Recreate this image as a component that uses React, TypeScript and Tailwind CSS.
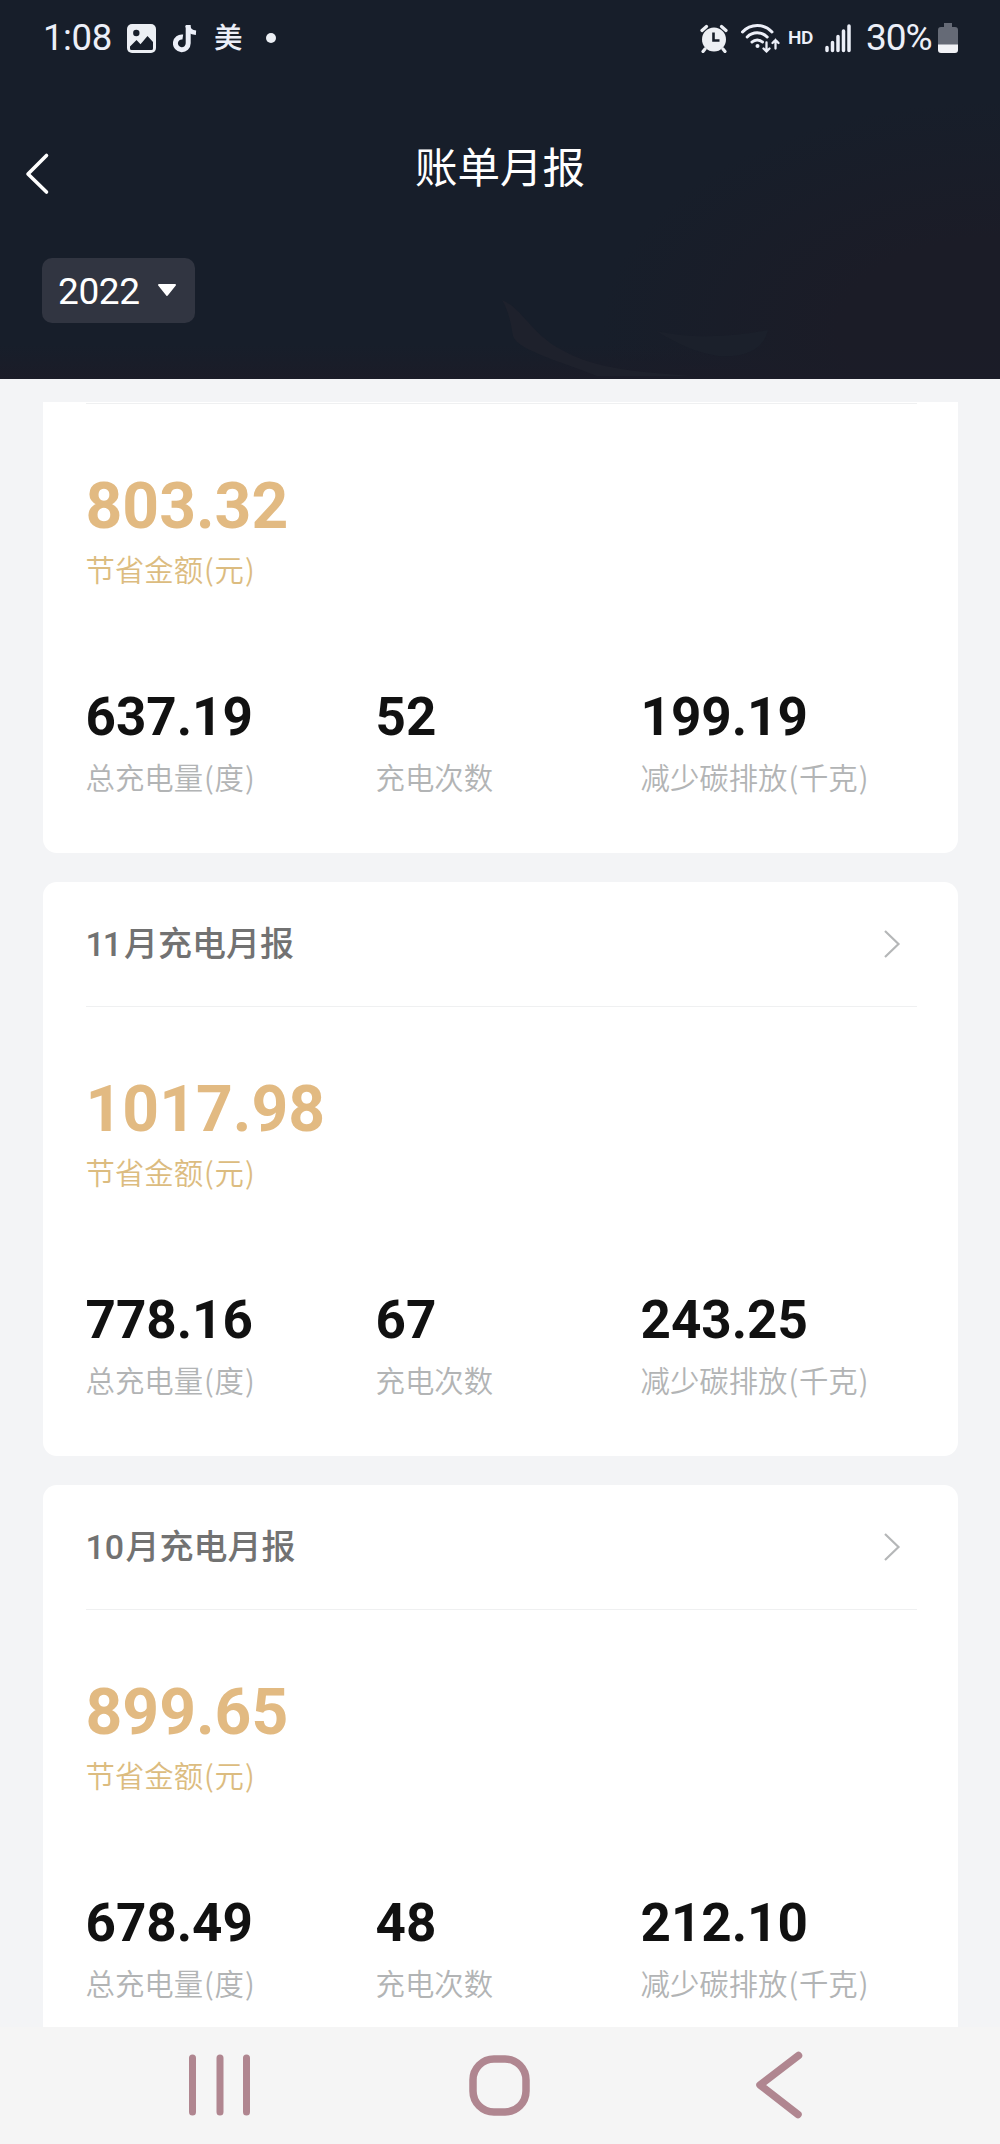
type Report = {
  month?: string;
  saved: string;
  energy: string;
  count: string;
  carbon: string;
};

const reports: Report[] = [
  { saved: "803.32", energy: "637.19", count: "52", carbon: "199.19" },
  { month: "11", saved: "1017.98", energy: "778.16", count: "67", carbon: "243.25" },
  { month: "10", saved: "899.65", energy: "678.49", count: "48", carbon: "212.10" },
];

function StatusBar() {
  return (
    <div className="flex h-[76px] items-center justify-between pl-[43px] pr-[42px] text-[#eceff8]">
      <div className="flex items-center">
        <span className="w-[84px] text-[36.5px] leading-[44px] tracking-[-0.4px]">1:08</span>
        <svg width="29" height="29" viewBox="0 0 29 29">
          <rect width="29" height="29" rx="5" fill="#eceff4" />
          <circle cx="9.3" cy="9" r="3.2" fill="#171e2a" />
          <path d="M3 22.5 9.5 16l4 4.200L20.500 12 26 18v6.500a1.500 1.500 0 0 1-1.500 1.500h-20A1.500 1.500 0 0 1 3 24.500z" fill="#171e2a" />
        </svg>
        <svg className="ml-[17px]" width="25" height="29" viewBox="0 0 25 29">
          <path d="M15.200 1v18.300a6.400 6.400 0 1 1-5.400-6.300" fill="none" stroke="currentColor" strokeWidth="5" />
          <path d="M14.500 1.500c.8 4.500 4 7 8.500 7.300" fill="none" stroke="currentColor" strokeWidth="4.500" />
        </svg>
        <span className="ml-[16px] pt-[1px] text-[28.500px] font-medium leading-[40px]">美</span>
        <span className="ml-[23px] h-[10px] w-[10px] rounded-full bg-[#eceff4]" />
      </div>

      <div className="flex items-center">
        <svg width="28" height="29" viewBox="0 0 28 29" fill="none">
          <circle cx="14" cy="15.500" r="12" fill="#eceff4" />
          <path d="M2 6.500 6.500 2.500M26 6.500l-4.500-4M5 25l-2 2.500M23 25l2 2.500" stroke="#eceff4" strokeWidth="3.200" strokeLinecap="round" />
          <path d="M13.500 8.500v8h6" stroke="#171e2a" strokeWidth="2.600" />
        </svg>
        <svg className="ml-[13px]" width="40" height="30" viewBox="0 0 40 30" fill="none" stroke="#eceff8" strokeLinecap="round">
          <path d="M1.500 9a20 20 0 0 1 29.500 0M6.200 14a14 14 0 0 1 20 0M11 19a7.600 7.600 0 0 1 10.500 0" strokeWidth="3" />
          <circle cx="16.500" cy="23" r="2" fill="#eceff8" stroke="none" />
          <path d="M25.500 19.500v9M22.500 25.500l3 3 3-3M34.500 25.500v-8.500M31.500 20l3-3 3 3" strokeWidth="2.300" />
        </svg>
        <span className="ml-[7px] w-[28px] text-[19px] font-semibold leading-[24px] tracking-[-0.5px]">HD</span>
        <svg className="ml-[9px]" width="27" height="29" viewBox="0 0 27 29" stroke="#eceff8" strokeWidth="3.500" strokeLinecap="round">
          <path d="M2 23.500v3M7.500 18.500V26.500M13 12.500V26.500M18.500 7V26.500M24 2V26.500" />
        </svg>
        <span className="ml-[14px] w-[72px] text-[37px] leading-[44px] tracking-[-1px]">30%</span>
        <svg width="20" height="30" viewBox="0 0 20 30">
          <path d="M6 0h8v4h3a3 3 0 0 1 3 3v15H0V7a3 3 0 0 1 3-3h3z" fill="#656a76" />
          <path d="M0 21.500h20V27a3 3 0 0 1-3 3H3a3 3 0 0 1-3-3z" fill="#f1f2f6" />
        </svg>
      </div>
    </div>
  );
}

function Header() {
  return (
    <header className="relative isolate h-[379px] shrink-0 bg-[#171e2a] text-white">
      {/* faint artwork behind the header */}
      <svg className="absolute inset-0 -z-10" width="1000" height="379" viewBox="0 0 1000 379">
        <defs>
          <radialGradient id="glow" gradientUnits="userSpaceOnUse" cx="0" cy="0" r="1" gradientTransform="translate(1000 330) scale(400 230)">
            <stop offset="0.4" stopColor="#1b1c27" />
            <stop offset="1" stopColor="#1b1c27" stopOpacity="0" />
          </radialGradient>
          <linearGradient id="ground" x1="0" y1="0" x2="0" y2="1">
            <stop offset="0" stopColor="#1b1c28" stopOpacity="0" />
            <stop offset="1" stopColor="#1b1c28" />
          </linearGradient>
        </defs>
        <rect width="1000" height="379" fill="url(#glow)" />
        <rect y="345" width="1000" height="34" fill="url(#ground)" />
        <path d="M502 303c20 8 30 35 60 50 35 20 80 22 130 26h-95c-35-14-80-26-84-40-2-12-4-24-11-36z" transform="translate(0 -3)" fill="#1e212c" />
        <path d="M656 366c36 8 76 6 112-1-4 18-20 28-50 26-24-4-40-12-62-25z" transform="translate(0 -35)" fill="#1b202b" />
      </svg>

      <StatusBar />
      <div className="grid h-[182px] grid-cols-[200px_1fr_200px] pt-[66px]">
        <svg className="ml-[24px] mt-[10px]" width="28" height="44" viewBox="0 0 28 44" fill="none">
          <path d="M22.500 3.500 4 22l18.500 18" stroke="#fff" strokeWidth="3.600" strokeLinecap="round" strokeLinejoin="round" />
        </svg>
        <h1 className="pt-[1px] text-center text-[42.500px] font-normal leading-[52px]">账单月报</h1>
      </div>
      <button className="ml-[42px] flex h-[65px] w-[153px] items-center rounded-[10px] bg-[#313541] pl-[16px]">
        <span className="w-[99px] pt-[3px] text-left text-[37px] leading-[46px] tracking-[-0.400px]">2022</span>
        <svg width="20" height="13" viewBox="0 0 20 13">
          <path d="M2 1h16L10 11z" fill="#fff" stroke="#fff" strokeWidth="2" strokeLinejoin="round" />
        </svg>
      </button>
    </header>
  );
}

function Label({ text, unit }: { text: string; unit?: string }) {
  return (
    <div className="whitespace-nowrap font-['Noto_Sans_CJK_SC',sans-serif] text-[29.400px] font-[350] leading-[42px]">
      {text}
      {unit && (
        <>
          <span className="pl-[1px] pr-[0.800px]">(</span>
          {unit}
          <span className="pl-[1px]">)</span>
        </>
      )}
    </div>
  );
}

function Stat({ value, text, unit }: { value: string; text: string; unit?: string }) {
  return (
    <div>
      <div className="text-[53px] font-bold leading-[60px] text-[#111]">{value}</div>
      <div className="mt-[8px] text-[#b2b4b5]">
        <Label text={text} unit={unit} />
      </div>
    </div>
  );
}

function ReportCard({ report }: { report: Report }) {
  return (
    <section className="h-[574px] shrink-0 rounded-[14px] bg-white pl-[43px] pr-[41px]">
      <div className="flex h-[125px] items-center justify-between border-b border-[#eff0f1]">
        {report.month && (
          <>
            <h2 className="flex text-[34px] font-medium leading-[44px] text-[#727272]">
              <span className={report.month === "11" ? "w-[38.500px] tracking-[-2px]" : "w-[40px]"}>{report.month}</span>
              月充电月报
            </h2>
            <svg className="mr-[16px]" width="19" height="32" viewBox="0 0 19 32" fill="none">
              <path d="M3 3 16.500 16 3 29" stroke="#b5b7b8" strokeWidth="2.200" />
            </svg>
          </>
        )}
      </div>
      <div className="mt-[64px] text-[64.200px] font-bold leading-[76px] text-[#e2ba82]">{report.saved}</div>
      <div className="mt-[3px] text-[#dcbc80]">
        <Label text="节省金额" unit="元" />
      </div>
      <div className="mt-[98px] grid grid-cols-[290px_265px_1fr]">
        <Stat value={report.energy} text="总充电量" unit="度" />
        <Stat value={report.count} text="充电次数" />
        <Stat value={report.carbon} text="减少碳排放" unit="千克" />
      </div>
    </section>
  );
}

function NavBar() {
  return (
    <nav className="flex h-[117px] items-center bg-[#f5f5f5] pb-[1px] pl-[188px]">
      <svg width="63" height="62" viewBox="0 0 63 62" stroke="#b08690" strokeWidth="7" strokeLinecap="round">
        <path d="M4.500 4v54M32 4v54M58.500 4v54" />
      </svg>
      <svg className="ml-[218px]" width="61" height="61" viewBox="0 0 61 61" fill="none">
        <rect x="4" y="4" width="53" height="53" rx="21" stroke="#b08690" strokeWidth="7.500" />
      </svg>
      <svg className="ml-[225px]" width="49" height="68" viewBox="0 0 49 68" fill="none">
        <path d="M43.500 4.500 5 34l38 29.500" stroke="#b08690" strokeWidth="7.500" strokeLinecap="round" strokeLinejoin="round" />
      </svg>
    </nav>
  );
}

export default function App() {
  return (
    <div className="flex h-[2144px] w-[1000px] flex-col overflow-hidden bg-[#f3f4f6] font-['Roboto','Noto_Sans_CJK_SC',sans-serif]">
      <Header />
      {/* list is scrolled, so the first card starts above the visible area */}
      <main className="mx-[42.500px] mt-[23px] h-[1625px] overflow-hidden">
        <div className="-mt-[123px] flex flex-col gap-[29px]">
          {reports.map((report) => (
            <ReportCard key={report.saved} report={report} />
          ))}
        </div>
      </main>
      <NavBar />
    </div>
  );
}
